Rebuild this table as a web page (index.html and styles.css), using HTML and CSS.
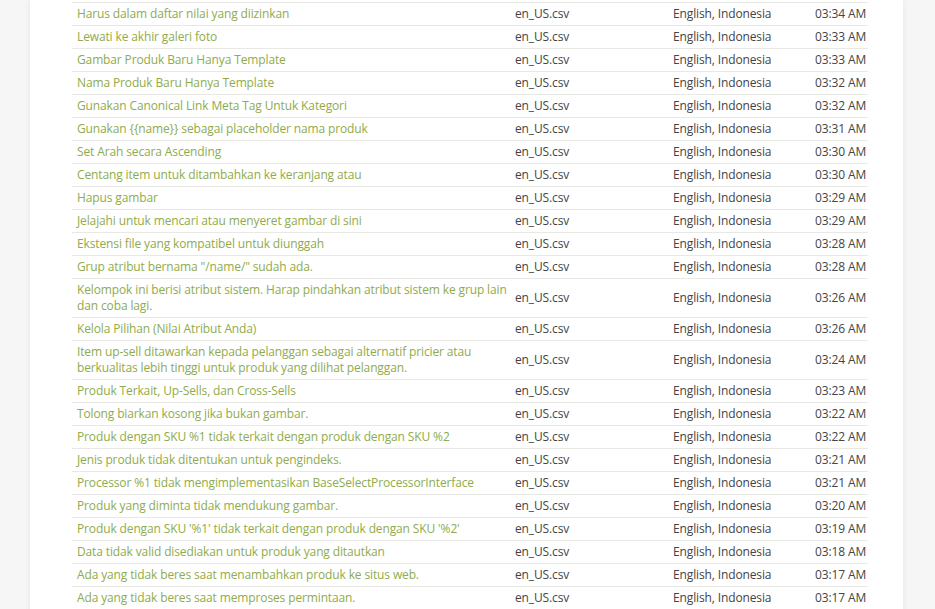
FILE: index.html
```html
<!DOCTYPE html>
<html lang="id">
<head>
<meta charset="utf-8">
<title>Terjemahan</title>
<link rel="stylesheet" href="styles.css">
</head>
<body>
<div class="card">
<table class="log">
<colgroup><col class="c-text"><col class="c-file"><col class="c-lang"><col class="c-time"></colgroup>
<tbody>
<tr><td class="phrase">Harus dalam daftar nilai yang diizinkan</td><td>en_US.csv</td><td>English, Indonesia</td><td>03:34 AM</td></tr>
<tr><td class="phrase">Lewati ke akhir galeri foto</td><td>en_US.csv</td><td>English, Indonesia</td><td>03:33 AM</td></tr>
<tr><td class="phrase">Gambar Produk Baru Hanya Template</td><td>en_US.csv</td><td>English, Indonesia</td><td>03:33 AM</td></tr>
<tr><td class="phrase">Nama Produk Baru Hanya Template</td><td>en_US.csv</td><td>English, Indonesia</td><td>03:32 AM</td></tr>
<tr><td class="phrase">Gunakan Canonical Link Meta Tag Untuk Kategori</td><td>en_US.csv</td><td>English, Indonesia</td><td>03:32 AM</td></tr>
<tr><td class="phrase">Gunakan {{name}} sebagai placeholder nama produk</td><td>en_US.csv</td><td>English, Indonesia</td><td>03:31 AM</td></tr>
<tr><td class="phrase">Set Arah secara Ascending</td><td>en_US.csv</td><td>English, Indonesia</td><td>03:30 AM</td></tr>
<tr><td class="phrase">Centang item untuk ditambahkan ke keranjang atau</td><td>en_US.csv</td><td>English, Indonesia</td><td>03:30 AM</td></tr>
<tr><td class="phrase">Hapus gambar</td><td>en_US.csv</td><td>English, Indonesia</td><td>03:29 AM</td></tr>
<tr><td class="phrase">Jelajahi untuk mencari atau menyeret gambar di sini</td><td>en_US.csv</td><td>English, Indonesia</td><td>03:29 AM</td></tr>
<tr><td class="phrase">Ekstensi file yang kompatibel untuk diunggah</td><td>en_US.csv</td><td>English, Indonesia</td><td>03:28 AM</td></tr>
<tr><td class="phrase">Grup atribut bernama "/name/" sudah ada.</td><td>en_US.csv</td><td>English, Indonesia</td><td>03:28 AM</td></tr>
<tr><td class="phrase">Kelompok ini berisi atribut sistem. Harap pindahkan atribut sistem ke grup lain dan coba lagi.</td><td>en_US.csv</td><td>English, Indonesia</td><td>03:26 AM</td></tr>
<tr><td class="phrase">Kelola Pilihan (Nilai Atribut Anda)</td><td>en_US.csv</td><td>English, Indonesia</td><td>03:26 AM</td></tr>
<tr><td class="phrase">Item up-sell ditawarkan kepada pelanggan sebagai alternatif pricier atau berkualitas lebih tinggi untuk produk yang dilihat pelanggan.</td><td>en_US.csv</td><td>English, Indonesia</td><td>03:24 AM</td></tr>
<tr><td class="phrase">Produk Terkait, Up-Sells, dan Cross-Sells</td><td>en_US.csv</td><td>English, Indonesia</td><td>03:23 AM</td></tr>
<tr><td class="phrase">Tolong biarkan kosong jika bukan gambar.</td><td>en_US.csv</td><td>English, Indonesia</td><td>03:22 AM</td></tr>
<tr><td class="phrase">Produk dengan SKU %1 tidak terkait dengan produk dengan SKU %2</td><td>en_US.csv</td><td>English, Indonesia</td><td>03:22 AM</td></tr>
<tr><td class="phrase">Jenis produk tidak ditentukan untuk pengindeks.</td><td>en_US.csv</td><td>English, Indonesia</td><td>03:21 AM</td></tr>
<tr><td class="phrase">Processor %1 tidak mengimplementasikan BaseSelectProcessorInterface</td><td>en_US.csv</td><td>English, Indonesia</td><td>03:21 AM</td></tr>
<tr><td class="phrase">Produk yang diminta tidak mendukung gambar.</td><td>en_US.csv</td><td>English, Indonesia</td><td>03:20 AM</td></tr>
<tr><td class="phrase">Produk dengan SKU '%1' tidak terkait dengan produk dengan SKU '%2'</td><td>en_US.csv</td><td>English, Indonesia</td><td>03:19 AM</td></tr>
<tr><td class="phrase">Data tidak valid disediakan untuk produk yang ditautkan</td><td>en_US.csv</td><td>English, Indonesia</td><td>03:18 AM</td></tr>
<tr><td class="phrase">Ada yang tidak beres saat menambahkan produk ke situs web.</td><td>en_US.csv</td><td>English, Indonesia</td><td>03:17 AM</td></tr>
<tr><td class="phrase">Ada yang tidak beres saat memproses permintaan.</td><td>en_US.csv</td><td>English, Indonesia</td><td>03:17 AM</td></tr>
</tbody>
</table>
</div>
</body>
</html>
```
FILE: styles.css
```css
html, body {
  margin: 0;
  padding: 0;
  background: #f6f6f6;
  height: 100%;
}
body {
  font-family: "Open Sans", "Liberation Sans", sans-serif;
  font-size: 12px;
  letter-spacing: -0.13px;
  color: #444;
}
.card {
  margin: 0 32px 0 30px;
  background: #fff;
  box-shadow: 0 0 6px rgba(0, 0, 0, 0.08);
  padding: 2px 35px 20px 42px;
  min-height: 100%;
  box-sizing: border-box;
}
.log {
  width: 796px;
  border-collapse: collapse;
  table-layout: fixed;
}
.c-text { width: 438px; }
.c-file { width: 158px; }
.c-lang { width: 142px; }
.c-time { width: 58px; }
.log td {
  border-top: 1px solid #e8e8e4;
  border-bottom: 1px solid #e8e8e4;
  padding: 3px 5px;
  line-height: 16px;
  vertical-align: middle;
  white-space: nowrap;
}
.log td.phrase {
  color: #8fab4b;
  white-space: normal;
  padding-right: 1px;
}
```
